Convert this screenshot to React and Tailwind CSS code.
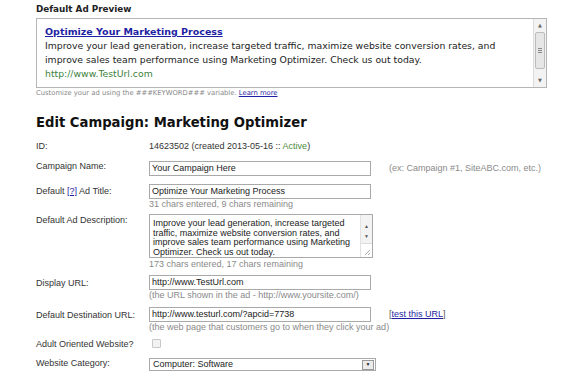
import React from 'react';

const sans = "font-['Liberation_Sans',Arial,sans-serif]";
const label = 'w-[113px] shrink-0 text-[9px] leading-[11px] text-[#333]';
const input = 'w-[222px] border border-[#a9a9a9] bg-white px-[2px] text-[9px] text-[#222]';
const help = 'text-[9px] leading-[11px] text-[#8a8a8a]';

function Row({ name, children, className = '' }) {
  return (
    <div className={`flex items-start ${className}`}>
      <div className={label}>{name}</div>
      <div className="flex-1">{children}</div>
    </div>
  );
}

export default function App() {
  return (
    <div className="min-h-screen bg-white pl-[36px] pt-[3px] font-['DejaVu_Sans',sans-serif]">
      <div className="text-[8.8px] font-bold leading-[12px] text-[#222]">Default Ad Preview</div>

      <div className="mt-[3px] flex h-[70px] w-[511px] border border-[#b5b5b5]">
        <div className="flex-1 pl-[8px] pt-[6px]">
          <div className="text-[9.5px] font-bold leading-[14px] text-[#1f1fa3] underline">
            Optimize Your Marketing Process
          </div>
          <div className="text-[9.3px] leading-[14px] text-[#222]">
            Improve your lead generation, increase targeted traffic, maximize website conversion rates, and
            <br />
            improve sales team performance using Marketing Optimizer. Check us out today.
          </div>
          <div className="text-[9.3px] leading-[14px] text-[#3d7f3d]">http://www.TestUrl.com</div>
        </div>
        <div className="flex w-[13px] flex-col border-l border-[#dcdcdc] bg-[#f3f3f3]">
          <div className="flex h-[13px] items-center justify-center text-[5px] text-[#666]">▲</div>
          <div className="mx-[1px] flex h-[37px] items-center justify-center rounded-[2px] border border-[#bcbcbc] bg-[#e6e6e6]">
            <div className="flex flex-col gap-[1px]">
              <div className="h-px w-[4px] bg-[#888]" />
              <div className="h-px w-[4px] bg-[#888]" />
              <div className="h-px w-[4px] bg-[#888]" />
            </div>
          </div>
          <div className="flex-1" />
          <div className="flex h-[13px] items-center justify-center text-[5px] text-[#666]">▼</div>
        </div>
      </div>

      <div className="mt-[1px] text-[6.8px] leading-[9px] text-[#888]">
        Customize your ad using the ###KEYWORD### variable.{' '}
        <span className="text-[#1f1fa3] underline">Learn more</span>
      </div>

      <div className="mt-[16px] text-[13.2px] font-bold leading-[18px] text-[#111]">
        Edit Campaign: Marketing Optimizer
      </div>

      <div className={`mt-[9px] flex flex-col ${sans}`}>
        <Row name="ID:">
          <div className="text-[9px] leading-[11px] text-[#333]">
            14623502 (created 2013-05-16 :: <span className="text-[#4d8a3a]">Active</span>)
          </div>
        </Row>

        <Row name="Campaign Name:" className="mt-[9px] items-center">
          <div className="flex items-center">
            <div className={`${input} h-[15px] bg-[#fdfac7] leading-[13px]`}>Your Campaign Here</div>
            <div className="ml-[18px] text-[9px] text-[#8a8a8a]">(ex: Campaign #1, SiteABC.com, etc.)</div>
          </div>
        </Row>

        <Row
          name={<span className="block pt-[2px]">Default <span className="text-[#1f1fa3] underline">[?]</span> Ad Title:</span>}
          className="mt-[8px]"
        >
          <div className={`${input} h-[15px] leading-[13px]`}>Optimize Your Marketing Process</div>
          <div className={help}>31 chars entered, 9 chars remaining</div>
        </Row>

        <Row name={<span className="block pt-[1px]">Default Ad Description:</span>} className="mt-[4px]">
          <div className="flex h-[44px] w-[224px] border border-[#a9a9a9] bg-white">
            <div className="flex-1 px-[3px] pt-[4px] text-[9px] leading-[9.5px] text-[#222]">
              Improve your lead generation, increase targeted
              <br />
              traffic, maximize website conversion rates, and
              <br />
              improve sales team performance using Marketing
              <br />
              Optimizer. Check us out today.
            </div>
            <div className="flex w-[12px] flex-col border-l border-[#e2e2e2] bg-[#f3f3f3]">
              <div className="flex h-[15px] items-end justify-center text-[5px] text-[#555]">▲</div>
              <div className="flex h-[13px] items-center justify-center text-[5px] text-[#555]">▼</div>
              <div className="flex flex-1 items-end justify-end border-t border-[#dcdcdc] bg-white p-[1px]">
                <svg width="8" height="8" viewBox="0 0 8 8">
                  <path d="M7 2 L2 7 M7 5 L5 7" stroke="#aaa" strokeWidth="1" />
                </svg>
              </div>
            </div>
          </div>
          <div className={`${help} mt-[1px]`}>173 chars entered, 17 chars remaining</div>
        </Row>

        <Row name={<span className="block pt-[3px]">Display URL:</span>} className="mt-[5px]">
          <div className={`${input} h-[15px] leading-[13px]`}>http://www.TestUrl.com</div>
          <div className={help}>(the URL shown in the ad - http://www.yoursite.com/)</div>
        </Row>

        <Row name={<span className="block pt-[3px]">Default Destination URL:</span>} className="mt-[6px]">
          <div className="flex items-center">
            <div className={`${input} h-[15px] leading-[13px]`}>http://www.testurl.com/?apcid=7738</div>
            <div className="ml-[18px] text-[9px] text-[#555]">
              [<span className="text-[#1f1fa3] underline">test this URL</span>]
            </div>
          </div>
          <div className={help}>(the web page that customers go to when they click your ad)</div>
        </Row>

        <Row name="Adult Oriented Website?" className="mt-[6px] items-center">
          <div className="ml-[3px] h-[9px] w-[9px] rounded-[1px] border border-[#c8c8c8] bg-[#f2f2f2]" />
        </Row>

        <Row name="Website Category:" className="mt-[8px] items-center">
          <div className="flex h-[13px] w-[227px] items-center border border-[#a9a9a9] bg-white">
            <div className="flex-1 px-[3px] text-[9px] leading-[11px] text-[#222]">Computer: Software</div>
            <div className="mr-[1px] flex h-[10px] w-[12px] items-center justify-center border border-[#999] bg-[#ececec] text-[5px] text-[#222]">▼</div>
          </div>
        </Row>
      </div>
    </div>
  );
}
